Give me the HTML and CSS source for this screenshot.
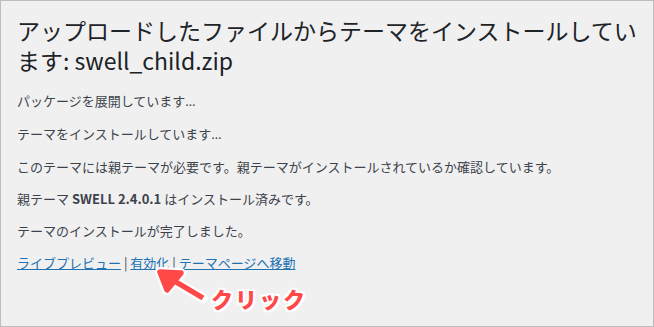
FILE: index.html
```html
<!DOCTYPE html>
<html lang="ja">
<head>
  <meta charset="UTF-8">
  <meta name="viewport" content="width=device-width, initial-scale=1.0">
  <title>テーマのインストール</title>
  <link rel="stylesheet" href="styles.css">
</head>
<body>
  <div class="install-frame">
    <h1 class="install-title">アップロードしたファイルからテーマをインストールしています: swell_child.zip</h1>
    <p>パッケージを展開しています<span class="dots">…</span></p>
    <p>テーマをインストールしています<span class="dots">…</span></p>
    <p>このテーマには親テーマが必要です。親テーマがインストールされているか確認しています。</p>
    <p>親テーマ <strong>SWELL 2.4.0.1</strong> はインストール済みです。</p>
    <p>テーマのインストールが完了しました。</p>
    <p class="install-actions">
      <a href="#">ライブプレビュー</a> | <a href="#">有効化</a> | <a href="#">テーマページへ移動</a>
    </p>

    <!-- annotation overlay -->
    <svg class="note-arrow" width="60" height="40" viewBox="0 0 60 40">
      <g stroke="#fff" stroke-width="10" stroke-linejoin="round" stroke-linecap="round" fill="#fff">
        <line x1="48" y1="31" x2="16" y2="12"/>
        <polygon points="5,5 26,6 12,23"/>
      </g>
      <g stroke="#ff4848" stroke-width="5.5" stroke-linejoin="round" fill="#ff4848">
        <line x1="48" y1="31" x2="16" y2="12"/>
        <polygon points="5,5 26,6 12,23"/>
      </g>
    </svg>
    <span class="note-label">クリック</span>
  </div>
</body>
</html>
```

FILE: styles.css
```css
* {
  box-sizing: border-box;
}

body {
  margin: 0;
  font-family: "Noto Sans CJK JP", "Noto Sans", sans-serif;
  background: #fff;
}

.install-frame {
  position: relative;
  width: 654px;
  height: 327px;
  padding: 14px 16px 0 16px;
  background: #f0f0f1;
  border: 1px solid #bdbdbd;
  color: #3c434a;
  overflow: hidden;
}

.install-title {
  margin: 0 0 16px;
  font-size: 23px;
  font-weight: 400;
  line-height: 30px;
  color: #1d2327;
}

.install-frame p {
  margin: 0 0 13px;
  font-size: 13px;
  line-height: 19px;
}

.install-frame .dots {
  font-family: "Noto Sans", sans-serif;
}

.install-frame strong {
  font-weight: 700;
}

.install-actions a {
  color: #2271b1;
  text-decoration: underline;
}

.note-arrow {
  position: absolute;
  left: 154px;
  top: 266px;
}

.note-label {
  position: absolute;
  left: 210px;
  top: 282px;
  font-family: "Noto Sans CJK JP", sans-serif;
  font-size: 22px;
  font-weight: 900;
  line-height: 30px;
  letter-spacing: 2px;
  color: #ff4848;
  text-shadow:
    2px 0 0 #fff, -2px 0 0 #fff, 0 2px 0 #fff, 0 -2px 0 #fff,
    2px 2px 0 #fff, -2px -2px 0 #fff, 2px -2px 0 #fff, -2px 2px 0 #fff;
}
```
